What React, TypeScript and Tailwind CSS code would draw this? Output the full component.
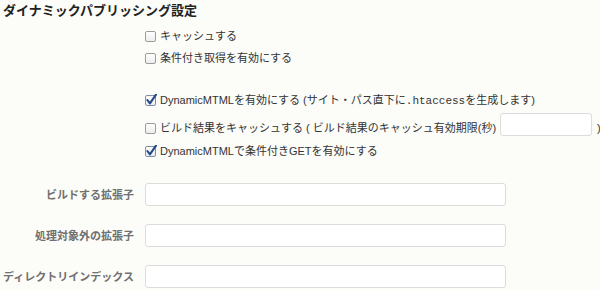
import React from "react";

const FONT = {
  fontFamily: '"Liberation Sans", "Noto Sans CJK JP", sans-serif',
};

function Box({ checked }: { checked?: boolean }) {
  return (
    <svg width="12" height="12" viewBox="0 0 12 12" className="flex-shrink-0">
      <defs>
        <linearGradient id="cbfill" x1="0" y1="0" x2="0" y2="1">
          <stop offset="0" stopColor="#ffffff" />
          <stop offset="1" stopColor="#ececec" />
        </linearGradient>
      </defs>
      <rect
        x="0.5"
        y="1.5"
        width="10"
        height="10"
        rx="1.5"
        fill="url(#cbfill)"
        stroke={checked ? "#7d8fa8" : "#9c9c9c"}
      />
      {checked && (
        <path
          d="M2.4 6 L4.9 9.4 L11 0.6"
          fill="none"
          stroke="#23498c"
          strokeWidth="2.1"
          strokeLinecap="round"
          strokeLinejoin="round"
        />
      )}
    </svg>
  );
}

function CheckRow({
  checked,
  children,
  className = "",
}: {
  checked?: boolean;
  children: React.ReactNode;
  className?: string;
}) {
  return (
    <div className={`flex items-center h-[22px] gap-[3px] ${className}`}>
      <Box checked={checked} />
      <span className="whitespace-nowrap">{children}</span>
    </div>
  );
}

function FieldRow({ label }: { label: string }) {
  return (
    <div className="flex items-center">
      <div className="w-[134px] text-right font-bold text-[#707070] whitespace-nowrap">
        {label}
      </div>
      <input
        type="text"
        className="ml-[11px] w-[361px] h-[23px] bg-white border border-[#dcdcdc] rounded-[3px] outline-none"
      />
    </div>
  );
}

export default function App() {
  return (
    <div
      className="w-[600px] h-[290px] overflow-hidden bg-[#fcfcf8] text-[#333] text-[11px] leading-[14px]"
      style={FONT}
    >
      {/* Section title */}
      <h2 className="pl-[3px] pt-[3px] text-[13px] leading-[16px] font-bold text-[#222]">
        ダイナミックパブリッシング設定
      </h2>

      <div className="pl-[145px] mt-[6px]">
        <CheckRow>キャッシュする</CheckRow>
        <CheckRow>条件付き取得を有効にする</CheckRow>

        <CheckRow checked className="mt-[20px]">
          DynamicMTMLを有効にする (サイト・パス直下に
          <span style={{ fontFamily: '"Liberation Mono", monospace' }}>.htaccess</span>
          を生成します)
        </CheckRow>

        <div className="flex items-start mt-[2px]">
          <CheckRow className="mt-[4px]">
            ビルド結果をキャッシュする ( ビルド結果のキャッシュ有効期限(秒)
          </CheckRow>
          <input
            type="text"
            className="ml-[4px] w-[92px] h-[23px] bg-white border border-[#dcdcdc] rounded-[3px] outline-none"
          />
          <span className="ml-[5px] mt-[8px]">)</span>
        </div>

        <CheckRow checked className="mt-[1px]">
          DynamicMTMLで条件付きGETを有効にする
        </CheckRow>
      </div>

      <div className="flex flex-col gap-[18px] mt-[21px]">
        <FieldRow label="ビルドする拡張子" />
        <FieldRow label="処理対象外の拡張子" />
        <FieldRow label="ディレクトリインデックス" />
      </div>
    </div>
  );
}
